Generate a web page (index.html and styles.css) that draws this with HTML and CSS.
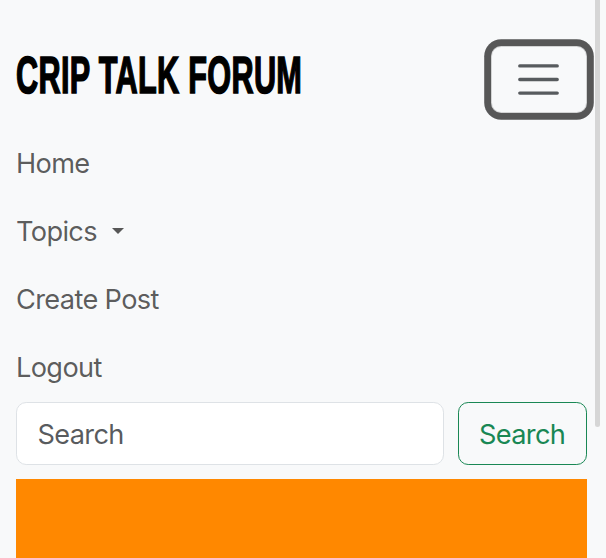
FILE: index.html
```html
<!DOCTYPE html>
<html lang="en">
<head>
<meta charset="utf-8">
<title>Crip Talk Forum</title>
<link rel="stylesheet" href="styles.css">
</head>
<body>
<nav class="navbar">
  <div class="navbar-top">
    <a class="brand" href="#"><span class="brand-text">CRIP TALK FORUM</span></a>
    <button class="toggler" type="button" aria-label="Toggle navigation">
      <svg class="toggler-icon" viewBox="0 0 30 30" width="51" height="51" aria-hidden="true">
        <path d="M4 7h22M4 15h22M4 23h22" stroke="rgba(33,37,41,0.75)" stroke-width="2" stroke-linecap="round" stroke-miterlimit="10" fill="none"/>
      </svg>
    </button>
  </div>
  <ul class="nav-list">
    <li><a class="nav-link" href="#">Home</a></li>
    <li><a class="nav-link" href="#">Topics<span class="caret"></span></a></li>
    <li><a class="nav-link" href="#">Create Post</a></li>
    <li><a class="nav-link" href="#">Logout</a></li>
  </ul>
  <form class="search-form">
    <input class="search-input" type="search" placeholder="Search" aria-label="Search">
    <button class="search-btn" type="button">Search</button>
  </form>
</nav>
<main class="content">
  <div class="banner"></div>
</main>
<div class="scroll-thumb"></div>
</body>
</html>
```
FILE: styles.css
```css
* { box-sizing: border-box; }
html, body { margin: 0; padding: 0; }
body {
  background: #f8f9fa;
  font-family: Inter, "Liberation Sans", sans-serif;
  font-size: 27.2px;
  line-height: 1.5;
  letter-spacing: -0.65px;
  color: #212529;
  overflow: hidden;
}
.navbar {
  padding: 46px 19.4px 13.6px 16px;
}
.navbar-top {
  display: flex;
  justify-content: space-between;
  align-items: center;
}
.brand {
  display: block;
  width: 283px;
  padding-bottom: 5px;
  text-decoration: none;
  color: #000;
  white-space: nowrap;
}
.brand-text {
  display: inline-block;
  font-family: "Liberation Sans", Arial, sans-serif;
  font-weight: 700;
  font-size: 52px;
  line-height: 52px;
  letter-spacing: 0.5px;
  transform: scaleX(0.59);
  transform-origin: left center;
  -webkit-text-stroke: 1.6px #000;
}
.toggler {
  display: flex;
  align-items: center;
  justify-content: center;
  padding: 7.2px 21.4px;
  background: transparent;
  border: 1px solid rgba(0,0,0,0.15);
  border-radius: 10.2px;
  box-shadow: 0 0 0 6.8px rgba(0,0,0,0.65);
  cursor: pointer;
}
.toggler-icon { display: block; }
.nav-list {
  list-style: none;
  margin: 15.2px 0 0;
  padding: 0;
}
.nav-link {
  display: block;
  padding: 15.4px 0 11.8px;
  line-height: 40.8px;
  color: rgba(0,0,0,0.65);
  text-decoration: none;
}
.caret {
  display: inline-block;
  margin-left: 15px;
  vertical-align: 0.255em;
  border-top: 6.8px solid;
  border-left: 6.8px solid transparent;
  border-right: 6.8px solid transparent;
  border-bottom: 0;
}
.search-form {
  display: flex;
  margin-top: 1.3px;
}
.search-input {
  flex: 1;
  min-width: 0;
  margin-right: 13.6px;
  padding: 12px 20.4px 8.4px;
  font: inherit;
  letter-spacing: -0.65px;
  line-height: 40.8px;
  color: #212529;
  background: #fff;
  border: 1px solid #dee2e6;
  border-radius: 10.2px;
  outline: none;
}
.search-input::placeholder { color: rgba(33,37,41,0.75); }
.search-btn {
  padding: 12px 20.4px 8.4px;
  font: inherit;
  letter-spacing: -0.65px;
  line-height: 40.8px;
  color: #198754;
  background: transparent;
  border: 1px solid #198754;
  border-radius: 10.2px;
}
.content {
  padding: 0 19.4px 0 16px;
}
.banner {
  height: 240px;
  background: #ff8800;
}
.scroll-thumb {
  position: fixed;
  top: 0;
  right: 6px;
  width: 5px;
  height: 427px;
  background: #d6d6d6;
  border-radius: 0 0 3px 3px;
}
```
